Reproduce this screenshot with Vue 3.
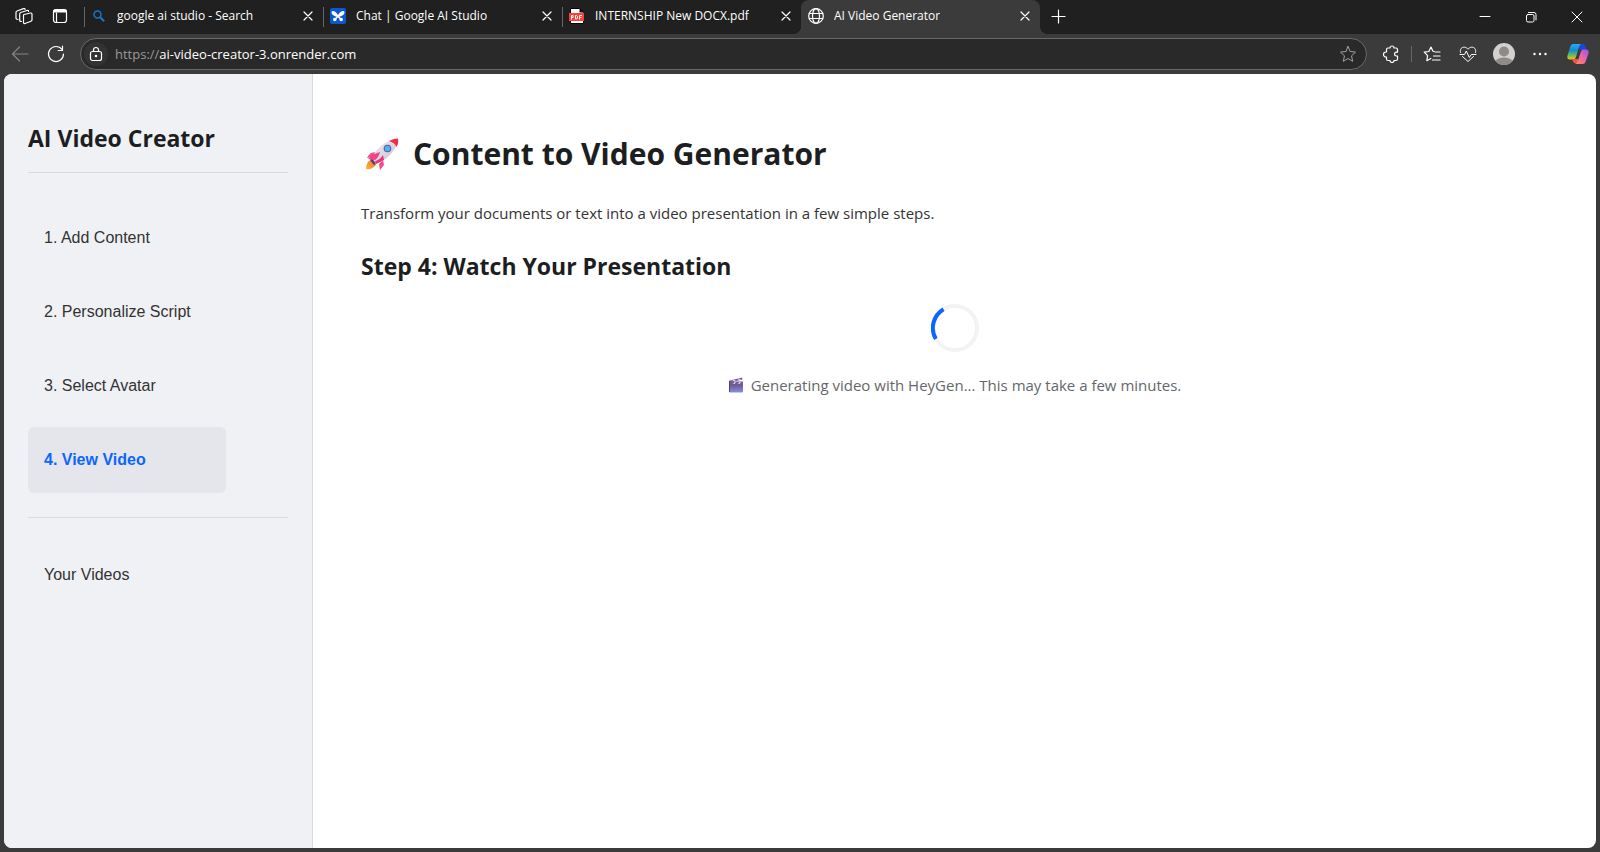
<script setup>
import { ref } from 'vue'

const tabs = ref([
  { id: 'search', title: 'google ai studio - Search' },
  { id: 'studio', title: 'Chat | Google AI Studio' },
  { id: 'pdf', title: 'INTERNSHIP New DOCX.pdf' },
  { id: 'globe', title: 'AI Video Generator' },
])
const activeTab = ref('globe')
const address = ref('ai-video-creator-3.onrender.com')
const steps = ['1. Add Content', '2. Personalize Script', '3. Select Avatar', '4. View Video']
const current = ref('4. View Video')
</script>

<template>
  <div class="browser">
    <header class="strip">
      <button class="lead" type="button" aria-label="Workspaces">
        <svg width="18" height="18" viewBox="0 0 18 18" class="line bold">
          <path d="M9 7.500 15.500 6q1.500-.2 1.500 1.300v5.500q0 1.200-1 1.500L10 16.500q-1.500.4-1.500-1V8.500q0-.8.5-1Z" />
          <path d="M6.500 14.500q-1.800.2-1.800-1.300V7q0-1.200 1-1.500L12 3.500q1.600-.4 1.600 1" />
          <path d="M3 12.500Q1 12.500 1 11V5.500Q1 4.300 2 4L8.500 1.600q1.400-.4 1.600.9" />
        </svg>
      </button>
      <button class="lead" type="button" aria-label="Tab actions">
        <svg width="16" height="16" viewBox="0 0 16 16" class="line bold">
          <rect x="1.500" y="1.500" width="13" height="13" rx="2.500" />
          <path d="M2.500 3h11" stroke-width="3" /><path d="M4.500 5v9" />
        </svg>
      </button>
      <nav class="tabs" aria-label="Open tabs">
        <div v-for="tab in tabs" :key="tab.id" class="tab" :class="{ active: tab.id === activeTab }">
          <button class="tab-main" type="button" @click="activeTab = tab.id">
            <svg v-if="tab.id === 'search'" width="16" height="16" viewBox="0 0 16 16" fill="none" stroke="#1478cf">
              <circle cx="6.500" cy="6.500" r="3.500" stroke-width="1.500" /><path d="m9.200 9.200 4 4" stroke-width="2" />
            </svg>
            <svg v-else-if="tab.id === 'studio'" width="16" height="16" viewBox="0 0 16 16">
              <rect width="16" height="16" rx="2" fill="#0b57d0" />
              <path d="M8 9C5 8.500 1.800 7 1.500 4.500 1.500 3 3.500 2.700 5 3.700 6.500 4.700 7.500 6 8 7.200c.5-1.200 1.500-2.500 3-3.500 1.500-1 3.500-.7 3.500.8C14.200 7 11 8.500 8 9Z" fill="#fff" />
              <circle cx="4.800" cy="11.500" r="1.800" fill="#fff" /><circle cx="11.200" cy="11.500" r="1.800" fill="#fff" />
              <path d="M5 11.300 8 8.300l3 3" stroke="#fff" stroke-width="1.500" fill="none" />
            </svg>
            <svg v-else-if="tab.id === 'pdf'" width="16" height="16" viewBox="0 0 16 16">
              <path d="M1.500.5h9l4 4v11h-13Z" fill="#fff" stroke="#000" /><path d="M10.500.5v4h4Z" fill="#111" />
              <rect y="5" width="15" height="8" fill="#ff3d3d" />
              <path d="M2.500 11.500v-4h1.500v2H2.500M6.500 7.500v3.500h1l1-1V8.500l-1-1ZM10.500 11.500v-4h2.500M10.500 9.500h2" fill="none" stroke="#fff" />
            </svg>
            <svg v-else width="16" height="16" viewBox="0 0 16 16" class="line bold">
              <circle cx="8" cy="8" r="7.300" /><ellipse cx="8" cy="8" rx="3.500" ry="7.300" /><path d="M1.200 5.500h13.600M1.200 10.500h13.600" />
            </svg>
            <span>{{ tab.title }}</span>
          </button>
          <button class="tab-close" type="button" :aria-label="'Close ' + tab.title">
            <svg width="16" height="16" viewBox="0 0 16 16" class="line bold"><path d="m4 4 8 8M12 4l-8 8" /></svg>
          </button>
        </div>
      </nav>
      <button class="new-tab" type="button" aria-label="New tab">
        <svg width="16" height="16" viewBox="0 0 16 16" class="line bold"><path d="M8.500 2v13M2 8.500h13" /></svg>
      </button>
      <div class="controls">
        <button type="button" aria-label="Minimize"><svg width="12" height="12" viewBox="0 0 12 12" class="line"><path d="M1 5.500h10" /></svg></button>
        <button type="button" aria-label="Restore">
          <svg width="12" height="12" viewBox="0 0 12 12" class="line"><rect x="1.500" y="3.500" width="7.500" height="7.500" rx="1.500" /><path d="M3.500 1.500H9q2 0 2 2V9" /></svg>
        </button>
        <button type="button" aria-label="Close window"><svg width="12" height="12" viewBox="0 0 12 12" class="line"><path d="m1 1 10 10M11 1 1 11" /></svg></button>
      </div>
    </header>

    <div class="toolbar">
      <button class="tool dim" type="button" aria-label="Back">
        <svg width="18" height="18" viewBox="0 0 18 18" class="line bold"><path d="M17 9H1.500M8.500 2l-7 7 7 7" /></svg>
      </button>
      <button class="tool" type="button" aria-label="Refresh">
        <svg width="18" height="18" viewBox="0 0 18 18" class="line bold"><path d="M16.500 9A7.500 7.500 0 1 1 15 4.500M15.500 1.200v4.300h-4.300" /></svg>
      </button>
      <div class="address">
        <button class="lock" type="button" aria-label="Site information">
          <svg width="16" height="16" viewBox="0 0 16 16" class="line bold"><rect x="2.500" y="5.500" width="11" height="9" rx="2" /><path d="M5.500 5.500V4a2.500 2.500 0 0 1 5 0v1.500" /><circle cx="8" cy="10" r=".7" fill="currentColor" /></svg>
        </button>
        <label for="url">https://</label>
        <input id="url" v-model="address" type="text" spellcheck="false" />
        <button class="star" type="button" aria-label="Add to favorites">
          <svg width="18" height="18" viewBox="0 0 18 18" class="line"><path d="m9 1.500 2.200 5 5.300.6-4 3.700 1.200 5.500L9 13.500l-4.700 2.800 1.200-5.500-4-3.700 5.300-.6Z" /></svg>
        </button>
      </div>
      <div class="tools">
        <button class="tool" type="button" aria-label="Extensions">
          <svg width="18" height="18" viewBox="0 0 18 18" class="line bold"><path d="M4.500 6V4.500Q4.500 3 6 3h2a2 2 0 0 1 4 0h2q1.500 0 1.500 1.500v2.700h-1a1.900 1.900 0 0 0 0 3.800h1v3q0 1.500-1.500 1.500h-2a2 2 0 0 1-4 0H6q-1.500 0-1.500-1.500V12H4a2.500 2.500 0 0 1 0-5h.5Z" /></svg>
        </button>
        <i class="rule"></i>
        <button class="tool" type="button" aria-label="Favorites">
          <svg width="18" height="18" viewBox="0 0 18 18" class="line bold"><path d="M11 6.500 9.800 6 8 2 5.800 6.500l-4.600.7 3.400 3.500-.8 5 4-2.300M12 7h5M10.500 11H17M9.500 15H17" /></svg>
        </button>
        <button class="tool" type="button" aria-label="Browser essentials">
          <svg width="18" height="18" viewBox="0 0 18 18" class="line"><path d="M1.500 7.500C.5 4 3 2 5.300 2.200 7 2.200 8 3 9 4.200c1-1.200 2-2 3.700-2C15 2 17.500 4 16.500 7.500M3.500 11.500 9 16.500l5.500-5M1 9.500h4.500L7.300 6l3 6.500 2-3H17" /></svg>
        </button>
        <button class="tool" type="button" aria-label="Profile">
          <svg width="22" height="22" viewBox="0 0 22 22"><circle cx="11" cy="11" r="11" fill="#d3d1ce" /><circle cx="11" cy="8.500" r="5" fill="#8e8b88" /><path d="M2.500 18Q5 14.500 11 14.500T19.500 18Q16 22 11 22T2.500 18Z" fill="#8e8b88" /></svg>
        </button>
        <button class="tool" type="button" aria-label="Settings and more">
          <svg width="18" height="18" viewBox="0 0 18 18" fill="#fff"><circle cx="3.500" cy="9" r="1.200" /><circle cx="9" cy="9" r="1.200" /><circle cx="14.500" cy="9" r="1.200" /></svg>
        </button>
        <button class="tool copilot" type="button" aria-label="Copilot">
          <svg width="24" height="22" viewBox="0 0 24 22">
            <defs>
              <linearGradient id="cool" x1="0" y1="0" x2="0" y2="1"><stop offset="0" stop-color="#27aaf4" /><stop offset=".4" stop-color="#168bd2" /><stop offset=".7" stop-color="#5dbb61" /><stop offset="1" stop-color="#f4c500" /></linearGradient>
              <linearGradient id="warm" x1="1" y1="0" x2="0" y2="1"><stop offset="0" stop-color="#9c4ff5" /><stop offset=".5" stop-color="#e966a8" /><stop offset="1" stop-color="#ff8a48" /></linearGradient>
            </defs>
            <path d="M12 1h5q1.500 0 2 1.500L20.500 7H14Z" fill="#1849d6" />
            <path d="M7 1h8q-1.500 1-2 3l-3 10q-.8 2.500-3 2.500H4Q.5 16.500 1.500 12.500l2.500-8Q5 1 7 1Z" fill="url(#cool)" />
            <path d="M6 16h6l1 4.500H10Q8 20.500 7 18.500Z" fill="#f45148" />
            <path d="M17 6.500h3q3.500 0 2.500 4l-2.500 7q-1 3.500-3 3.500H9q2-.5 2.800-3l3-9q.6-2.500 2.200-2.500Z" fill="url(#warm)" />
          </svg>
        </button>
      </div>
    </div>

    <div class="page">
      <aside class="sidebar">
        <h2 class="brand">AI Video Creator</h2>
        <nav class="steps" aria-label="Steps">
          <button v-for="step in steps" :key="step" type="button" :class="{ current: step === current }" @click="current = step">{{ step }}</button>
        </nav>
        <nav class="library" aria-label="Library"><button type="button">Your Videos</button></nav>
      </aside>
      <main class="content">
        <h1>
          <svg class="rocket" width="44" height="36" viewBox="0 0 44 36" role="img" aria-label="Rocket">
            <defs>
              <linearGradient id="hull" x1="0" y1="0" x2="1" y2="1"><stop offset="0" stop-color="#f4eef7" /><stop offset="1" stop-color="#c9bdcf" /></linearGradient>
              <linearGradient id="flame" x1="1" y1="0" x2="0" y2="1"><stop offset="0" stop-color="#e97525" /><stop offset="1" stop-color="#ffb33c" /></linearGradient>
            </defs>
            <path d="M10 24Q5 26 5 33q6 1 10-4Z" fill="url(#flame)" />
            <path d="m14 16-4 1q-3 2-4 5l6-1ZM22 24l1 5-4 5-1-6Z" fill="#f54b88" />
            <path d="M11 24q3-12 15-18 6-3 10-3 1 5-3 11-7 10-18 14Z" fill="url(#hull)" />
            <path d="M28 5q5-3 9-2.500 1 4-1.500 8.500-2-4.500-7.500-6Z" fill="#ec304c" />
            <path d="m11 22 4 6-2 1-4-5Z" fill="#4e4271" />
            <path d="m13 18 6-2q-1 5-5 8l-7-1Z" fill="#ef4584" />
            <path d="m22 19 1 5-8 4-1-3q5-1 8-6Z" fill="#e93574" />
            <circle cx="26.500" cy="12.500" r="3.800" fill="#50658e" /><circle cx="26.500" cy="12.500" r="2.800" fill="#54aff7" />
          </svg>
          <span>Content to Video Generator</span>
        </h1>
        <p class="intro">Transform your documents or text into a video presentation in a few simple steps.</p>
        <h2>Step 4: Watch Your Presentation</h2>
        <section class="loading" role="status">
          <svg class="spinner" width="48" height="48" viewBox="0 0 48 48" fill="none" stroke-width="4">
            <circle cx="24" cy="24" r="22" stroke="#f3f3f3" /><path d="M4.800 35A22 22 0 0 1 12.500 5.200" stroke="#0b66ff" />
          </svg>
          <p>
            <svg width="16" height="16" viewBox="0 0 16 16" role="img" aria-label="Clapper board">
              <defs><linearGradient id="board" x1="0" y1="0" x2="0" y2="1"><stop offset="0" stop-color="#69518d" /><stop offset="1" stop-color="#8a91dc" /></linearGradient></defs>
              <path d="M1 7h14v7.500q0 1-1 1H2q-1 0-1-1Z" fill="url(#board)" />
              <path d="M1 4.500h14v3H1ZM1 3.700 14 .5l.5 2L2 5.500Z" fill="#75609a" />
              <path d="m4 3 2.500 1.500L8 4 5.500 2.600ZM9 1.800l2.500 1.400 1.500-.4-2.500-1.400ZM5 7l1.500-2H8L6.500 7ZM10 7l1.500-2H13l-1.500 2Z" fill="#e3d9f2" />
              <path d="M1 4v11h1V4Z" fill="#534066" />
            </svg>
            <span>Generating video with HeyGen... This may take a few minutes.</span>
          </p>
        </section>
      </main>
    </div>
  </div>
</template>

<style>
body { margin: 0; background: #3b3b3b; }
</style>

<style scoped>
* { box-sizing: border-box; }
.browser { display: flex; flex-direction: column; min-height: 100vh; background: #3b3b3b; color: #fff; font-family: "Open Sans", "Noto Sans", sans-serif; }
button { display: flex; align-items: center; justify-content: center; padding: 0; border: 0; background: none; color: inherit; font: inherit; cursor: pointer; }
svg { display: block; flex: none; }
.line { fill: none; stroke: currentColor; stroke-width: 1; stroke-linejoin: round; stroke-linecap: round; }
.bold { stroke-width: 1.2; }

.strip { display: flex; height: 34px; padding-left: 6px; background: #202020; }
.lead { width: 36px; height: 32px; }
.tabs { display: flex; flex: 0 1 956px; min-width: 0; margin-left: 6px; }
.tab { position: relative; display: flex; flex: 1 1 0; align-items: center; min-width: 0; height: 34px; padding: 0 7px 2px; }
.tab:not(.active)::before { content: ""; position: absolute; left: 0; top: 7px; width: 1px; height: 20px; background: #666; }
.tab.active { border-radius: 8px 8px 0 0; background: #3b3b3b; }
.tab.active::before, .tab.active::after { content: ""; position: absolute; bottom: 0; width: 8px; height: 8px; }
.tab.active::before { right: 100%; background: radial-gradient(circle at 0 0, #202020 8px, #3b3b3b 8px); }
.tab.active::after { left: 100%; background: radial-gradient(circle at 100% 0, #202020 8px, #3b3b3b 8px); }
.tab-main { flex: 1; justify-content: flex-start; gap: 10px; min-width: 0; height: 32px; font-size: 12px; line-height: 16px; white-space: nowrap; }
.tab-main span { overflow: hidden; text-overflow: ellipsis; }
.tab-close { width: 16px; height: 32px; }
.new-tab { width: 36px; height: 32px; }
.controls { display: flex; margin-left: auto; }
.controls button { width: 46px; height: 34px; }

.toolbar { display: flex; align-items: center; height: 40px; padding: 0 2px; }
.tool { width: 36px; height: 32px; }
.dim { color: #858585; }
.address { display: flex; flex: 1; align-items: center; height: 32px; margin: 0 6px; padding: 0 9px 0 3px; border: 1px solid #6a6a6a; border-radius: 16px; background: #292929; font-size: 13px; line-height: 20px; }
.lock { width: 24px; height: 24px; margin-right: 7px; border-radius: 50%; background: #333; }
.address label { color: #9a9a9a; }
.address input { flex: 1; min-width: 0; padding: 0; border: 0; outline: 0; background: none; color: #fff; font: inherit; }
.star { color: #a0a0a0; }
.tools { display: flex; align-items: center; }
.rule { width: 1px; height: 16px; margin: 0 2px; background: #666; }
.copilot { width: 40px; }

.page { display: flex; flex: 1; margin: 0 4px 4px; overflow: hidden; border-radius: 8px; background: #fff; color: #333; }
.sidebar { flex: none; width: 309px; padding: 48px 24px; border-right: 1px solid #d9dbde; background: #f0f1f5; }
h1, h2, p { margin: 0; }
h1, h2 { color: #1c1e21; font-weight: 700; }
h2 { font-size: 23px; line-height: 32px; }
.brand { padding-bottom: 18px; border-bottom: 1px solid #d9dbde; }
.steps { display: flex; flex-direction: column; align-items: flex-start; gap: 8px; padding: 32px 0 24px; border-bottom: 1px solid #d9dbde; }
.library { padding-top: 24px; }
.steps button, .library button { justify-content: flex-start; width: 198px; height: 66px; padding: 0 16px; border-radius: 6px; color: #333; font: 16px/24px "Liberation Sans", Arial, sans-serif; }
.steps .current { background: #e4e6eb; color: #0b66ff; font-weight: 700; }

.content { flex: 1; min-width: 0; padding: 56px 48px; }
h1 { display: flex; align-items: center; gap: 8px; font-size: 30px; line-height: 48px; }
.intro { margin-top: 23px; font-size: 15px; line-height: 24px; }
.content h2 { margin-top: 25px; }
.loading { display: flex; flex-direction: column; align-items: center; gap: 21px; margin-top: 22px; }
.loading p { display: flex; align-items: center; gap: 7px; color: #65676b; font-size: 15px; line-height: 24px; }
</style>
